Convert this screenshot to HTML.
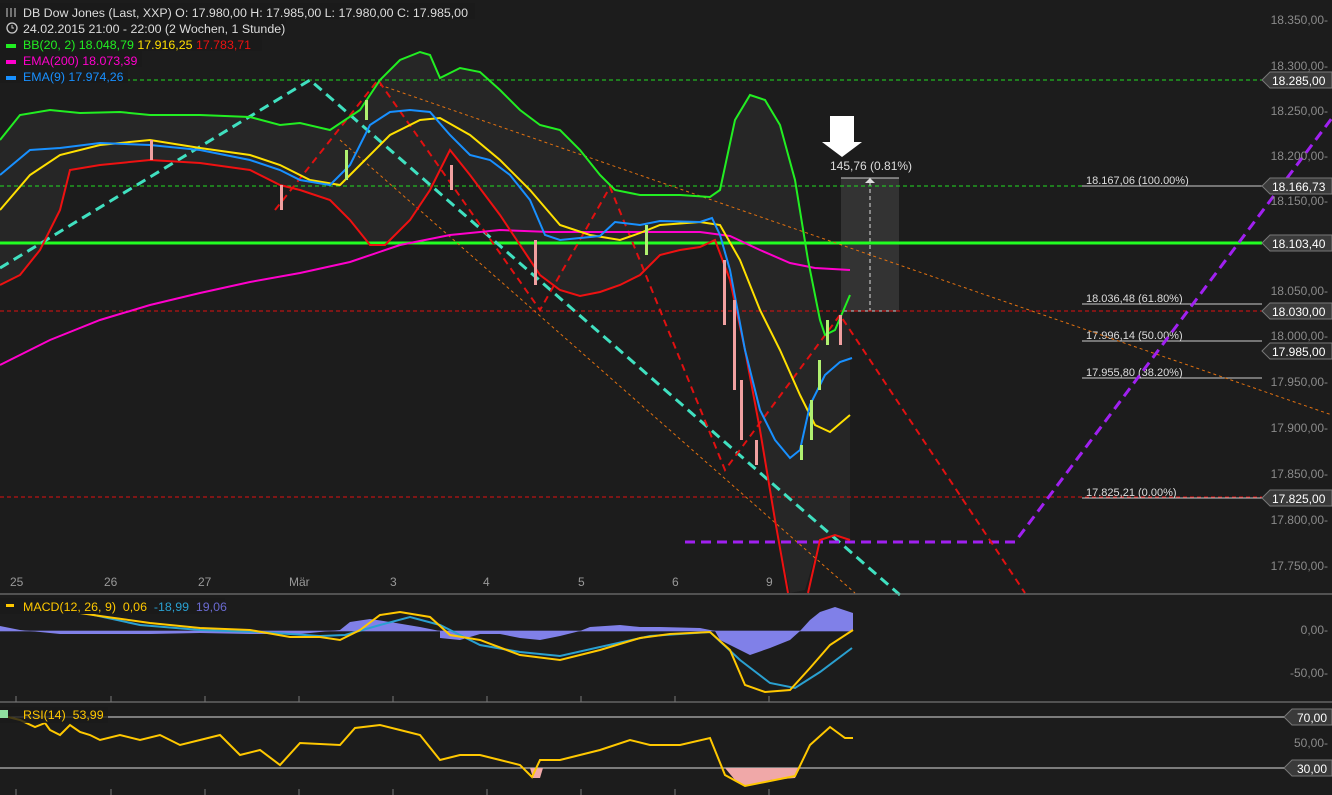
<!DOCTYPE html>
<html><head><meta charset="utf-8"><style>
html,body{margin:0;padding:0;background:#1c1c1c;}
svg{display:block;font-family:"Liberation Sans",sans-serif;}
</style></head><body>
<svg width="1332" height="795" viewBox="0 0 1332 795" xmlns="http://www.w3.org/2000/svg">
<rect width="1332" height="795" fill="#1c1c1c"/>
<polygon fill="#262626" points="0,140 20,115 50,110 80,113 120,112 150,115 200,115 250,117 280,125 300,123 330,130 360,110 380,80 400,60 420,52 430,55 440,78 460,68 480,72 500,90 520,110 540,125 560,130 580,150 600,175 615,190 640,195 680,195 710,197 720,190 735,120 750,95 765,100 780,125 795,180 808,260 820,320 825,335 835,330 850,295 850,540 835,535 820,540 805,590 790,593 775,520 760,430 745,350 730,280 715,240 700,247 680,250 660,255 640,275 620,285 600,292 580,296 560,290 540,275 520,245 500,215 470,175 450,150 430,190 410,220 385,245 370,245 350,220 330,200 300,190 280,185 250,170 200,163 150,160 100,165 70,170 60,210 40,250 20,275 0,285"/>
<rect x="841" y="178" width="58" height="133" fill="#333333"/>
<line x1="841" y1="178" x2="899" y2="178" stroke="#ccc" stroke-width="1"/>
<line x1="841" y1="311" x2="899" y2="311" stroke="#ccc" stroke-width="1"/>
<line x1="870" y1="182" x2="870" y2="311" stroke="#ddd" stroke-dasharray="4,3"/>
<polygon points="865,183 875,183 870,178" fill="#ddd"/>
<text x="830" y="170" fill="#ddd" font-size="12">145,76 (0.81%)</text>
<polygon points="830,116 854,116 854,142 862,142 842,157 822,142 830,142" fill="#fff"/>
<line x1="0" y1="80" x2="1262" y2="80" stroke="#22dd22" stroke-dasharray="4,3"/>
<line x1="0" y1="186" x2="1262" y2="186" stroke="#22dd22" stroke-dasharray="4,3"/>
<line x1="0" y1="243" x2="1262" y2="243" stroke="#22ff22" stroke-width="3"/>
<line x1="0" y1="311" x2="1262" y2="311" stroke="#e01010" stroke-dasharray="4,3"/>
<line x1="0" y1="497" x2="1262" y2="497" stroke="#e01010" stroke-dasharray="4,3"/>
<g stroke="#ccc" stroke-width="1">
<line x1="1082" y1="186" x2="1262" y2="186"/>
<line x1="1082" y1="304" x2="1262" y2="304"/>
<line x1="1082" y1="341" x2="1262" y2="341"/>
<line x1="1082" y1="378" x2="1262" y2="378"/>
<line x1="1082" y1="498" x2="1262" y2="498"/>
</g>
<g fill="#ddd" font-size="11">
<text x="1086" y="184">18.167,06 (100.00%)</text>
<text x="1086" y="302">18.036,48 (61.80%)</text>
<text x="1086" y="339">17.996,14 (50.00%)</text>
<text x="1086" y="376">17.955,80 (38.20%)</text>
<text x="1086" y="496">17.825,21 (0.00%)</text>
</g>
<line x1="380" y1="85" x2="1332" y2="415" stroke="#e07010" stroke-dasharray="3,3"/>
<line x1="340" y1="140" x2="855" y2="593" stroke="#e07010" stroke-dasharray="3,3"/>
<polyline points="0,268 310,80 900,595" fill="none" stroke="#40e0c0" stroke-width="3" stroke-dasharray="10,6"/>
<polyline points="685,542 1015,542 1332,118" fill="none" stroke="#a020f0" stroke-width="3" stroke-dasharray="10,6"/>
<polyline points="275,210 378,80 540,310 610,187 725,470 840,315 1025,593" fill="none" stroke="#e01010" stroke-width="2" stroke-dasharray="7,5"/>
<polyline fill="none" stroke="#ff00cc" stroke-width="2" points="0,365 50,340 100,320 150,305 200,293 250,282 300,273 350,262 400,245 450,235 500,230 550,232 600,232 650,232 700,232 730,236 760,250 790,263 815,268 850,270"/>
<polyline fill="none" stroke="#22ee22" stroke-width="2" points="0,140 20,115 50,110 80,113 120,112 150,115 200,115 250,117 280,125 300,123 330,130 360,110 380,80 400,60 420,52 430,55 440,78 460,68 480,72 500,90 520,110 540,125 560,130 580,150 600,175 615,190 640,195 680,195 710,197 720,190 735,120 750,95 765,100 780,125 795,180 808,260 820,320 825,335 835,330 850,295"/>
<polyline fill="none" stroke="#ffe000" stroke-width="2" points="0,210 30,175 60,155 100,145 150,140 200,148 250,155 280,165 310,180 340,185 360,165 390,135 420,120 440,118 470,135 500,160 530,190 560,225 590,235 620,240 640,233 660,225 700,222 720,225 740,260 760,310 780,350 800,395 815,425 830,432 850,415"/>
<polyline fill="none" stroke="#ee1111" stroke-width="2" points="0,285 20,275 40,250 60,210 70,170 100,165 150,160 200,163 250,170 280,185 300,190 330,200 350,220 370,245 385,245 410,220 430,190 450,150 470,175 500,215 520,245 540,275 560,290 580,296 600,292 620,285 640,275 660,255 680,250 700,247 715,240 730,280 745,350 760,430 775,520 788,593"/>
<polyline fill="none" stroke="#ee1111" stroke-width="2" points="808,593 820,540 835,535 850,540"/>
<polyline fill="none" stroke="#1890ff" stroke-width="2" points="0,175 30,150 60,148 100,143 150,145 200,150 250,160 280,170 300,180 330,185 350,165 370,125 390,112 410,110 430,112 450,135 470,155 490,160 510,175 530,200 545,235 560,240 580,238 600,236 615,222 640,225 660,221 700,222 712,218 720,235 730,270 745,350 760,410 775,440 790,458 800,450 810,405 825,375 840,362 852,358"/>
<g fill="#f0a0a0">
<rect x="723" y="260" width="3" height="65"/><rect x="733" y="300" width="3" height="90"/><rect x="740" y="380" width="3" height="60"/><rect x="755" y="440" width="3" height="25"/><rect x="839" y="315" width="3" height="30"/><rect x="534" y="240" width="3" height="45"/><rect x="280" y="185" width="3" height="25"/><rect x="150" y="140" width="3" height="20"/><rect x="450" y="165" width="3" height="25"/>
</g>
<g fill="#b0f070">
<rect x="810" y="400" width="3" height="40"/><rect x="818" y="360" width="3" height="30"/><rect x="826" y="320" width="3" height="25"/><rect x="345" y="150" width="3" height="30"/><rect x="365" y="100" width="3" height="20"/><rect x="645" y="225" width="3" height="30"/><rect x="800" y="445" width="3" height="15"/>
</g>
<g fill="#8a8a8a" font-size="12" text-anchor="end">
<text x="1328" y="24">18.350,00-</text>
<text x="1328" y="70">18.300,00-</text>
<text x="1328" y="115">18.250,00-</text>
<text x="1328" y="160">18.200,00-</text>
<text x="1328" y="205">18.150,00-</text>
<text x="1328" y="295">18.050,00-</text>
<text x="1328" y="340">18.000,00-</text>
<text x="1328" y="386">17.950,00-</text>
<text x="1328" y="432">17.900,00-</text>
<text x="1328" y="478">17.850,00-</text>
<text x="1328" y="524">17.800,00-</text>
<text x="1328" y="570">17.750,00-</text>
<text x="1328" y="634">0,00-</text>
<text x="1328" y="677">-50,00-</text>
<text x="1328" y="747">50,00-</text>
</g>
<g font-size="12" fill="#fff">
<g transform="translate(0,80)"><polygon points="1262,0 1270,-8 1332,-8 1332,8 1270,8" fill="#3a3a3a" stroke="#777"/><text x="1272" y="5">18.285,00</text></g>
<g transform="translate(0,186)"><polygon points="1262,0 1270,-8 1332,-8 1332,8 1270,8" fill="#3a3a3a" stroke="#777"/><text x="1272" y="5">18.166,73</text></g>
<g transform="translate(0,243)"><polygon points="1262,0 1270,-8 1332,-8 1332,8 1270,8" fill="#3a3a3a" stroke="#777"/><text x="1272" y="5">18.103,40</text></g>
<g transform="translate(0,311)"><polygon points="1262,0 1270,-8 1332,-8 1332,8 1270,8" fill="#3a3a3a" stroke="#777"/><text x="1272" y="5">18.030,00</text></g>
<g transform="translate(0,351)"><polygon points="1262,0 1270,-8 1332,-8 1332,8 1270,8" fill="#2a2a2a" stroke="#777"/><text x="1272" y="5">17.985,00</text></g>
<g transform="translate(0,498)"><polygon points="1262,0 1270,-8 1332,-8 1332,8 1270,8" fill="#3a3a3a" stroke="#777"/><text x="1272" y="5">17.825,00</text></g>
<g transform="translate(0,717)"><polygon points="1284,0 1292,-8 1332,-8 1332,8 1292,8" fill="#3a3a3a" stroke="#777"/><text x="1297" y="5">70,00</text></g>
<g transform="translate(0,768)"><polygon points="1284,0 1292,-8 1332,-8 1332,8 1292,8" fill="#3a3a3a" stroke="#777"/><text x="1297" y="5">30,00</text></g>
</g>
<g fill="#999" font-size="12">
<text x="10" y="586">25</text><text x="104" y="586">26</text><text x="198" y="586">27</text><text x="289" y="586">Mär</text><text x="390" y="586">3</text><text x="483" y="586">4</text><text x="578" y="586">5</text><text x="672" y="586">6</text><text x="766" y="586">9</text>
</g>
<line x1="0" y1="594" x2="1332" y2="594" stroke="#888"/>
<line x1="0" y1="702" x2="1332" y2="702" stroke="#888"/>
<g stroke="#777">
<line x1="16" y1="696" x2="16" y2="702"/><line x1="111" y1="696" x2="111" y2="702"/><line x1="205" y1="696" x2="205" y2="702"/><line x1="299" y1="696" x2="299" y2="702"/><line x1="393" y1="696" x2="393" y2="702"/><line x1="487" y1="696" x2="487" y2="702"/><line x1="581" y1="696" x2="581" y2="702"/><line x1="675" y1="696" x2="675" y2="702"/><line x1="769" y1="696" x2="769" y2="702"/>
<line x1="16" y1="789" x2="16" y2="795"/><line x1="111" y1="789" x2="111" y2="795"/><line x1="205" y1="789" x2="205" y2="795"/><line x1="299" y1="789" x2="299" y2="795"/><line x1="393" y1="789" x2="393" y2="795"/><line x1="487" y1="789" x2="487" y2="795"/><line x1="581" y1="789" x2="581" y2="795"/><line x1="675" y1="789" x2="675" y2="795"/><line x1="769" y1="789" x2="769" y2="795"/>
</g>
<line x1="0" y1="631" x2="853" y2="631" stroke="#5a5aa0"/>
<polygon fill="#8080e8" points="0,626 20,630 60,634 100,634 150,634 200,633 250,634 300,634 340,630 350,622 370,619 390,622 420,627 440,631 440,638 460,640 480,634 500,634 520,638 540,640 560,636 580,631 590,627 620,625 640,627 660,627 700,628 715,631 720,640 740,650 750,655 770,648 790,640 800,631 810,620 820,612 835,607 853,613 853,631 0,631"/>
<polyline fill="none" stroke="#2aa0d0" stroke-width="2" points="0,610 30,605 80,612 140,625 200,630 260,632 320,636 345,635 380,625 410,617 440,625 480,645 520,652 560,656 600,647 650,636 710,632 740,660 770,683 795,688 820,672 852,648"/>
<polyline fill="none" stroke="#ffc800" stroke-width="2" points="0,606 30,606 60,610 100,616 150,623 200,628 250,630 290,637 320,637 340,640 360,630 380,615 400,612 430,617 450,635 480,640 520,655 560,660 600,650 640,638 670,634 710,632 730,650 745,685 765,692 790,690 810,668 830,645 853,630"/>
<rect x="0" y="598" width="225" height="16" fill="#1a1a1a"/>
<rect x="6" y="604" width="8" height="3" fill="#ffc800"/>
<text x="23" y="611" font-size="12.4" fill="#ffc800" style="white-space:pre">MACD(12, 26, 9)  0,06  <tspan fill="#2aa0d0">-18,99</tspan>  <tspan fill="#6a6ad0">19,06</tspan></text>
<line x1="0" y1="717" x2="1284" y2="717" stroke="#ddd"/>
<line x1="0" y1="768" x2="1284" y2="768" stroke="#ddd"/>
<polygon fill="#f0a8a8" points="725,768 735,780 745,786 760,783 770,780 795,778 800,768"/>
<polygon fill="#f0a8a8" points="530,768 533,778 540,778 543,768"/>
<polyline fill="none" stroke="#ffc800" stroke-width="2" points="0,715 20,720 35,727 45,723 50,730 60,735 70,725 80,732 90,735 100,740 120,735 140,740 160,735 180,745 200,740 220,735 240,755 260,750 280,765 300,743 340,745 355,728 380,725 400,730 420,735 440,760 460,755 480,755 500,760 520,765 532,777 540,760 560,760 600,750 630,740 650,745 680,745 710,738 725,775 745,786 770,781 795,776 810,745 830,727 845,738 853,738"/>
<rect x="0" y="707" width="108" height="16" fill="#1a1a1a" opacity="0.8"/>
<rect x="0" y="710" width="8" height="8" fill="#90e0a0"/>
<text x="23" y="719" font-size="12.4" fill="#ffc800" style="white-space:pre">RSI(14)  53,99</text>
<g font-size="12.4" style="white-space:pre">
<rect x="0" y="3" width="475" height="16" fill="#1a1a1a"/>
<rect x="0" y="19" width="286" height="16" fill="#1a1a1a"/>
<rect x="0" y="35" width="262" height="16" fill="#1a1a1a"/>
<rect x="0" y="51" width="142" height="16" fill="#1a1a1a"/>
<rect x="0" y="67" width="128" height="16" fill="#1a1a1a"/>
<g stroke="#ccc" stroke-width="1"><line x1="7" y1="8" x2="7" y2="17"/><line x1="11" y1="8" x2="11" y2="17"/><line x1="15" y1="8" x2="15" y2="17"/></g>
<circle cx="12" cy="28" r="5" fill="none" stroke="#ccc" stroke-width="1.3"/><path d="M12,25 V28 H14" stroke="#ccc" fill="none"/>
<text x="23" y="17" fill="#ddd">DB Dow Jones (Last, XXP)  O: 17.980,00  H: 17.985,00  L: 17.980,00  C: 17.985,00</text>
<text x="23" y="33" fill="#ddd">24.02.2015 21:00 - 22:00 (2 Wochen, 1 Stunde)</text>
<rect x="6" y="44" width="10" height="4" fill="#22ee22"/>
<text x="23" y="49" fill="#22ee22">BB(20, 2)  18.048,79  <tspan fill="#ffe000">17.916,25</tspan>  <tspan fill="#ee1111">17.783,71</tspan></text>
<rect x="6" y="60" width="10" height="4" fill="#ff00cc"/>
<text x="23" y="65" fill="#ff00cc">EMA(200)  18.073,39</text>
<rect x="6" y="76" width="10" height="4" fill="#1890ff"/>
<text x="23" y="81" fill="#1890ff">EMA(9)  17.974,26</text>
</g>
</svg>
</body></html>
